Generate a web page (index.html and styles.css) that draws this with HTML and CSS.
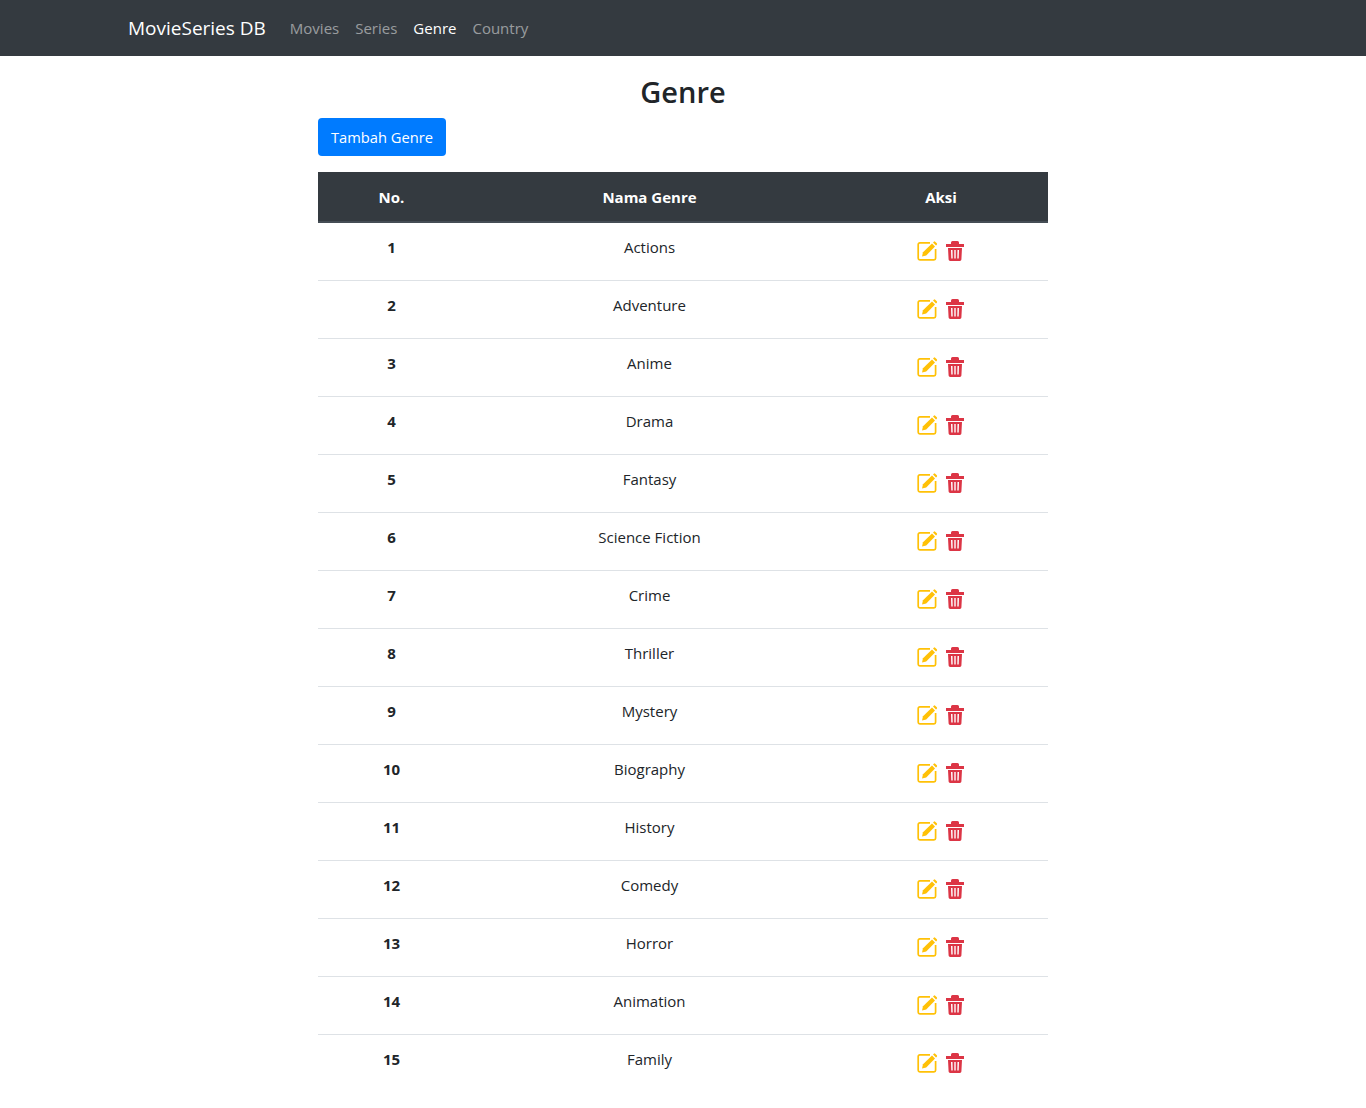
FILE: index.html
```html
<!DOCTYPE html>
<html lang="en">
<head>
    <meta charset="UTF-8">
    <title>Genre</title>
    <link rel="stylesheet" href="styles.css">
</head>
<body>
    <svg class="icon-defs" aria-hidden="true">
        <symbol id="icon-edit" viewBox="0 0 21 20">
            <path class="edit-box" d="M13 1.800H2.800a1.600 1.600 0 0 0-1.600 1.600V17.200a1.600 1.600 0 0 0 1.600 1.600H17a1.600 1.600 0 0 0 1.600-1.600V8"/>
            <path d="M5 15.600l1-4.400L15 2.400l3 3L9.200 14.500z"/>
            <path d="M16 1.500l.8-.8a1 1 0 0 1 1.400 0l1.600 1.600a1 1 0 0 1 0 1.400l-.8.8z"/>
        </symbol>
        <symbol id="icon-trash" viewBox="0 0 18 20">
            <path d="M0 3h5V1.500A1.500 1.500 0 0 1 6.500 0h5A1.500 1.500 0 0 1 13 1.500V3h5v3H0z"/>
            <path fill-rule="evenodd" d="M2 7h14l-.6 11.600A1.500 1.500 0 0 1 13.900 20H4.100a1.500 1.500 0 0 1-1.500-1.400zM5 9l.3 8.500h1.400L6.500 9zm3.300 0v8.500h1.400V9zm3.200 0l-.2 8.500h1.400L13 9z"/>
        </symbol>
    </svg>

    <nav class="navbar">
        <a class="brand" href="#">MovieSeries DB</a>
        <ul class="nav-links">
            <li><a href="#">Movies</a></li>
            <li><a href="#">Series</a></li>
            <li><a class="active" href="#">Genre</a></li>
            <li><a href="#">Country</a></li>
        </ul>
    </nav>

    <main class="content">
        <h2>Genre</h2>
        <a class="btn-add" href="#">Tambah Genre</a>

        <table class="genre-table">
            <colgroup>
                <col class="col-no">
                <col class="col-name">
                <col class="col-action">
            </colgroup>
            <thead>
                <tr><th>No.</th><th>Nama Genre</th><th>Aksi</th></tr>
            </thead>
            <tbody>
                <tr><th>1</th><td>Actions</td><td class="actions"><a class="edit" href="#"><svg class="icon-edit"><use href="#icon-edit"/></svg></a><a class="delete" href="#"><svg class="icon-trash"><use href="#icon-trash"/></svg></a></td></tr>
                <tr><th>2</th><td>Adventure</td><td class="actions"><a class="edit" href="#"><svg class="icon-edit"><use href="#icon-edit"/></svg></a><a class="delete" href="#"><svg class="icon-trash"><use href="#icon-trash"/></svg></a></td></tr>
                <tr><th>3</th><td>Anime</td><td class="actions"><a class="edit" href="#"><svg class="icon-edit"><use href="#icon-edit"/></svg></a><a class="delete" href="#"><svg class="icon-trash"><use href="#icon-trash"/></svg></a></td></tr>
                <tr><th>4</th><td>Drama</td><td class="actions"><a class="edit" href="#"><svg class="icon-edit"><use href="#icon-edit"/></svg></a><a class="delete" href="#"><svg class="icon-trash"><use href="#icon-trash"/></svg></a></td></tr>
                <tr><th>5</th><td>Fantasy</td><td class="actions"><a class="edit" href="#"><svg class="icon-edit"><use href="#icon-edit"/></svg></a><a class="delete" href="#"><svg class="icon-trash"><use href="#icon-trash"/></svg></a></td></tr>
                <tr><th>6</th><td>Science Fiction</td><td class="actions"><a class="edit" href="#"><svg class="icon-edit"><use href="#icon-edit"/></svg></a><a class="delete" href="#"><svg class="icon-trash"><use href="#icon-trash"/></svg></a></td></tr>
                <tr><th>7</th><td>Crime</td><td class="actions"><a class="edit" href="#"><svg class="icon-edit"><use href="#icon-edit"/></svg></a><a class="delete" href="#"><svg class="icon-trash"><use href="#icon-trash"/></svg></a></td></tr>
                <tr><th>8</th><td>Thriller</td><td class="actions"><a class="edit" href="#"><svg class="icon-edit"><use href="#icon-edit"/></svg></a><a class="delete" href="#"><svg class="icon-trash"><use href="#icon-trash"/></svg></a></td></tr>
                <tr><th>9</th><td>Mystery</td><td class="actions"><a class="edit" href="#"><svg class="icon-edit"><use href="#icon-edit"/></svg></a><a class="delete" href="#"><svg class="icon-trash"><use href="#icon-trash"/></svg></a></td></tr>
                <tr><th>10</th><td>Biography</td><td class="actions"><a class="edit" href="#"><svg class="icon-edit"><use href="#icon-edit"/></svg></a><a class="delete" href="#"><svg class="icon-trash"><use href="#icon-trash"/></svg></a></td></tr>
                <tr><th>11</th><td>History</td><td class="actions"><a class="edit" href="#"><svg class="icon-edit"><use href="#icon-edit"/></svg></a><a class="delete" href="#"><svg class="icon-trash"><use href="#icon-trash"/></svg></a></td></tr>
                <tr><th>12</th><td>Comedy</td><td class="actions"><a class="edit" href="#"><svg class="icon-edit"><use href="#icon-edit"/></svg></a><a class="delete" href="#"><svg class="icon-trash"><use href="#icon-trash"/></svg></a></td></tr>
                <tr><th>13</th><td>Horror</td><td class="actions"><a class="edit" href="#"><svg class="icon-edit"><use href="#icon-edit"/></svg></a><a class="delete" href="#"><svg class="icon-trash"><use href="#icon-trash"/></svg></a></td></tr>
                <tr><th>14</th><td>Animation</td><td class="actions"><a class="edit" href="#"><svg class="icon-edit"><use href="#icon-edit"/></svg></a><a class="delete" href="#"><svg class="icon-trash"><use href="#icon-trash"/></svg></a></td></tr>
                <tr><th>15</th><td>Family</td><td class="actions"><a class="edit" href="#"><svg class="icon-edit"><use href="#icon-edit"/></svg></a><a class="delete" href="#"><svg class="icon-trash"><use href="#icon-trash"/></svg></a></td></tr>
            </tbody>
        </table>
    </main>
</body>
</html>
```

FILE: styles.css
```css
/* Reset and Base Styles */
* {
    margin: 0;
    padding: 0;
    box-sizing: border-box;
}

body {
    font-family: "Open Sans", "Noto Sans", sans-serif;
    font-size: 15px;
    line-height: 24px;
    color: #212529;
    background: #fff;
}

a {
    text-decoration: none;
}

.icon-defs {
    display: none;
}

/* Navbar */
.navbar {
    display: flex;
    align-items: center;
    height: 56px;
    padding: 0 128px;
    background: #343a40;
}

.brand {
    font-size: 19px;
    line-height: 30px;
    color: #fff;
    margin-right: 16px;
}

.nav-links {
    display: flex;
    list-style: none;
}

.nav-links a {
    display: block;
    padding: 0 8px;
    color: rgba(255, 255, 255, 0.5);
}

.nav-links a.active {
    color: #fff;
}

/* Main Content */
.content {
    width: 730px;
    margin: 0 auto;
    padding-top: 17px;
}

.content h2 {
    font-size: 29px;
    font-weight: 600;
    line-height: 38px;
    text-align: center;
    margin-bottom: 7px;
}

.btn-add {
    display: inline-block;
    width: 128px;
    padding: 7px 0;
    font-size: 14.7px;
    text-align: center;
    color: #fff;
    background: #007bff;
    border-radius: 4px;
}

/* Table */
.genre-table {
    width: 100%;
    margin-top: 16px;
    border-collapse: collapse;
    table-layout: fixed;
    text-align: center;
}

.col-no {
    width: 147px;
}

.col-name {
    width: 369px;
}

.col-action {
    width: 214px;
}

.genre-table thead th {
    height: 50px;
    padding: 12px;
    color: #fff;
    background: #343a40;
    border-bottom: 2px solid #454d55;
}

.genre-table tbody th,
.genre-table tbody td {
    height: 58px;
    padding: 12px;
    vertical-align: top;
    border-bottom: 1px solid #dee2e6;
}

.genre-table tbody tr:last-child th,
.genre-table tbody tr:last-child td {
    border-bottom: none;
}

.genre-table .actions {
    padding-right: 13px;
    line-height: 0;
}

.actions a {
    display: inline-block;
    margin: 6px 4px 0;
}

.actions svg {
    display: block;
    height: 20px;
    fill: currentColor;
}

.edit-box {
    fill: none;
    stroke: currentColor;
    stroke-width: 1.7;
}

.icon-edit {
    width: 21px;
}

.icon-trash {
    width: 18px;
}

.edit {
    color: #ffc107;
}

.delete {
    color: #dc3545;
}
```
